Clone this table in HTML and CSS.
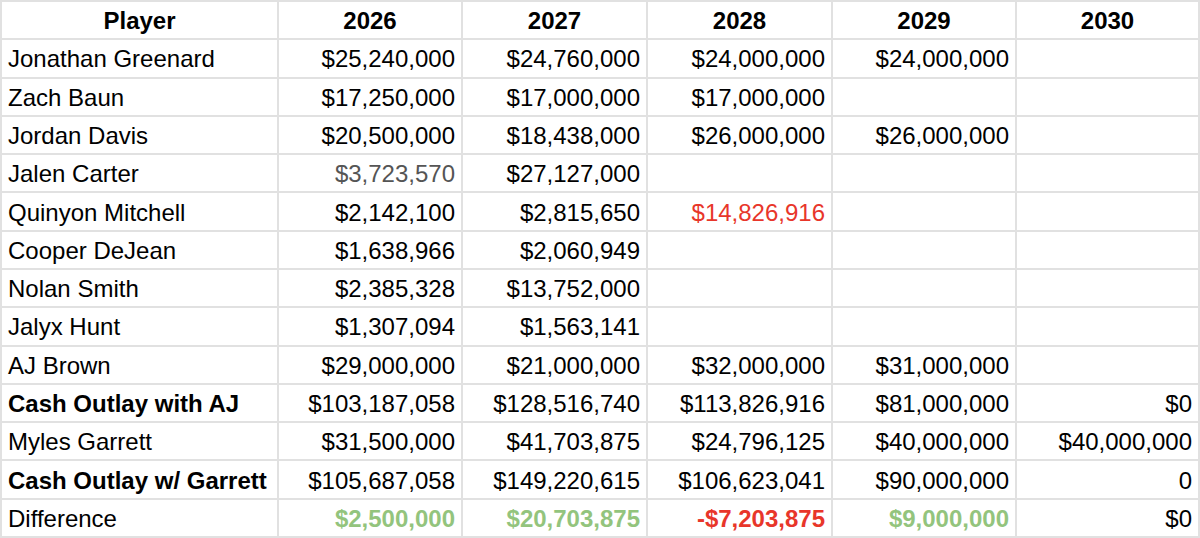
FILE: index.html
```html
<!DOCTYPE html>
<html>
<head>
<meta charset="utf-8">
<link rel="stylesheet" href="styles.css">
</head>
<body>
<div class="sheet">
  <div class="c head">Player</div><div class="c head">2026</div><div class="c head">2027</div><div class="c head">2028</div><div class="c head">2029</div><div class="c head">2030</div>

  <div class="c name">Jonathan Greenard</div><div class="c num">$25,240,000</div><div class="c num">$24,760,000</div><div class="c num">$24,000,000</div><div class="c num">$24,000,000</div><div class="c num"></div>

  <div class="c name">Zach Baun</div><div class="c num">$17,250,000</div><div class="c num">$17,000,000</div><div class="c num">$17,000,000</div><div class="c num"></div><div class="c num"></div>

  <div class="c name">Jordan Davis</div><div class="c num">$20,500,000</div><div class="c num">$18,438,000</div><div class="c num">$26,000,000</div><div class="c num">$26,000,000</div><div class="c num"></div>

  <div class="c name">Jalen Carter</div><div class="c num gray">$3,723,570</div><div class="c num">$27,127,000</div><div class="c num"></div><div class="c num"></div><div class="c num"></div>

  <div class="c name">Quinyon Mitchell</div><div class="c num">$2,142,100</div><div class="c num">$2,815,650</div><div class="c num red">$14,826,916</div><div class="c num"></div><div class="c num"></div>

  <div class="c name">Cooper DeJean</div><div class="c num">$1,638,966</div><div class="c num">$2,060,949</div><div class="c num"></div><div class="c num"></div><div class="c num"></div>

  <div class="c name">Nolan Smith</div><div class="c num">$2,385,328</div><div class="c num">$13,752,000</div><div class="c num"></div><div class="c num"></div><div class="c num"></div>

  <div class="c name">Jalyx Hunt</div><div class="c num">$1,307,094</div><div class="c num">$1,563,141</div><div class="c num"></div><div class="c num"></div><div class="c num"></div>

  <div class="c name">AJ Brown</div><div class="c num">$29,000,000</div><div class="c num">$21,000,000</div><div class="c num">$32,000,000</div><div class="c num">$31,000,000</div><div class="c num"></div>

  <div class="c name bold">Cash Outlay with AJ</div><div class="c num">$103,187,058</div><div class="c num">$128,516,740</div><div class="c num">$113,826,916</div><div class="c num">$81,000,000</div><div class="c num">$0</div>

  <div class="c name">Myles Garrett</div><div class="c num">$31,500,000</div><div class="c num">$41,703,875</div><div class="c num">$24,796,125</div><div class="c num">$40,000,000</div><div class="c num">$40,000,000</div>

  <div class="c name bold">Cash Outlay w/ Garrett</div><div class="c num">$105,687,058</div><div class="c num">$149,220,615</div><div class="c num">$106,623,041</div><div class="c num">$90,000,000</div><div class="c num">0</div>

  <div class="c name">Difference</div><div class="c num bold green">$2,500,000</div><div class="c num bold green">$20,703,875</div><div class="c num bold red">-$7,203,875</div><div class="c num bold green">$9,000,000</div><div class="c num">$0</div>
</div>
</body>
</html>
```

FILE: styles.css
```css
html, body {
  margin: 0;
  padding: 0;
  background: #ffffff;
}

.sheet {
  width: 1200px;
  height: 538px;
  box-sizing: border-box;
  padding: 2px;
  display: grid;
  grid-template-columns: 275px 182px 183px 183px 182px 181px;
  grid-template-rows: repeat(14, 1fr);
  gap: 2px;
  background: #e1e1e1;
  font-family: "Liberation Sans", Arial, sans-serif;
  font-size: 24px;
  color: #000000;
}

.c {
  background: #ffffff;
  display: flex;
  align-items: center;
  white-space: nowrap;
  overflow: hidden;
  padding-top: 2px;
  box-sizing: border-box;
}

.head {
  justify-content: center;
  font-weight: bold;
}

.name {
  padding-left: 6px;
}

.num {
  justify-content: flex-end;
  padding-right: 6px;
}

.bold {
  font-weight: bold;
}

.gray {
  color: #555555;
}

.red {
  color: #e8362a;
}

.green {
  color: #93c47d;
}
```
